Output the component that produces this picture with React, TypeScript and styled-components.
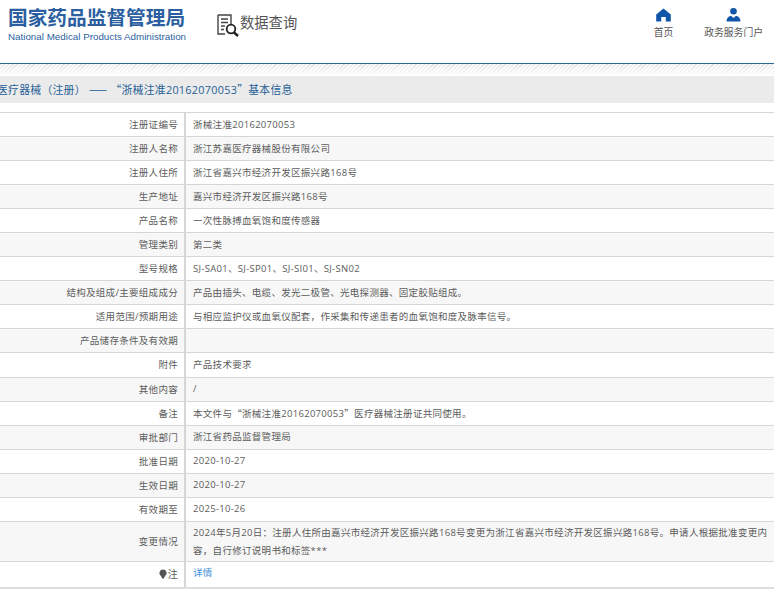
import React from "react";
import styled, { createGlobalStyle } from "styled-components";

const GlobalStyle = createGlobalStyle`
  html, body {
    margin: 0;
    padding: 0;
    background: #fff;
    overflow: hidden;
  }
  body {
    font-family: "Open Sans", "Noto Sans CJK SC", sans-serif;
  }
`;

const CjkMark = styled.span`
  font-family: "Noto Sans CJK SC", sans-serif;
`;

interface RowData {
  label: string;
  value?: React.ReactNode;
}

const rows: RowData[] = [
  { label: "注册证编号", value: "浙械注准20162070053" },
  { label: "注册人名称", value: "浙江苏嘉医疗器械股份有限公司" },
  { label: "注册人住所", value: "浙江省嘉兴市经济开发区振兴路168号" },
  { label: "生产地址", value: "嘉兴市经济开发区振兴路168号" },
  { label: "产品名称", value: "一次性脉搏血氧饱和度传感器" },
  { label: "管理类别", value: "第二类" },
  { label: "型号规格", value: "SJ-SA01、SJ-SP01、SJ-SI01、SJ-SN02" },
  { label: "结构及组成/主要组成成分", value: "产品由插头、电缆、发光二极管、光电探测器、固定胶贴组成。" },
  { label: "适用范围/预期用途", value: "与相应监护仪或血氧仪配套，作采集和传递患者的血氧饱和度及脉率信号。" },
  { label: "产品储存条件及有效期" },
  { label: "附件", value: "产品技术要求" },
  { label: "其他内容", value: "/" },
  {
    label: "备注",
    value: (
      <>
        本文件与<CjkMark>“</CjkMark>浙械注准20162070053<CjkMark>”</CjkMark>医疗器械注册证共同使用。
      </>
    ),
  },
  { label: "审批部门", value: "浙江省药品监督管理局" },
  { label: "批准日期", value: "2020-10-27" },
  { label: "生效日期", value: "2020-10-27" },
  { label: "有效期至", value: "2025-10-26" },
  {
    label: "变更情况",
    value:
      "2024年5月20日：注册人住所由嘉兴市经济开发区振兴路168号变更为浙江省嘉兴市经济开发区振兴路168号。申请人根据批准变更内容，自行修订说明书和标签***",
  },
];

const App: React.FC = () => {
  return (
    <Page>
      <GlobalStyle />
      <Header>
        <Brand>
          <BrandName>国家药品监督管理局</BrandName>
          <BrandSub>National Medical Products Administration</BrandSub>
        </Brand>
        <QueryTitle>
          <svg width="23" height="24" viewBox="0 0 23 24" fill="none">
            <path d="M1 1h13v9M1 1v19h7" stroke="#444" strokeWidth="1.4" />
            <path d="M4 5h7M4 8.500h7M4 12h4M4 15.500h3" stroke="#444" strokeWidth="1.4" />
            <circle cx="14" cy="15" r="4.300" stroke="#222" strokeWidth="1.800" />
            <path d="M17 18.500l4 3.500" stroke="#222" strokeWidth="2.600" />
          </svg>
          <span>数据查询</span>
        </QueryTitle>
        <NavLinks>
          <NavItem>
            <svg width="15" height="14" viewBox="0 0 15 14">
              <path d="M7.500 0.500L14.800 6.400V13.500H9.800V9H5.200V13.500H0.200V6.400Z" fill="#0f56a8" />
            </svg>
            <span>首页</span>
          </NavItem>
          <NavItem>
            <svg width="15" height="14" viewBox="0 0 15 14">
              <circle cx="7.500" cy="3.300" r="3.300" fill="#0f56a8" />
              <path
                d="M0.500 13.500C0.500 10.500 2 8.500 5 7.800L7.500 10L10 7.800C13 8.500 14.500 10.500 14.500 13.500Z"
                fill="#0f56a8"
              />
            </svg>
            <span>政务服务门户</span>
          </NavItem>
        </NavLinks>
      </Header>
      <HatchStrip />
      <Breadcrumb>
        <BreadcrumbText>
          医疗器械（注册）&nbsp;<CjkMark>——</CjkMark>&nbsp;<CjkMark>“</CjkMark>浙械注准20162070053
          <CjkMark>”</CjkMark>基本信息
        </BreadcrumbText>
      </Breadcrumb>
      <InfoTable>
        {rows.map((row, i) => (
          <Row key={row.label} $striped={i % 2 === 1}>
            <LabelCell>{row.label}</LabelCell>
            <ValueCell>{row.value}</ValueCell>
          </Row>
        ))}
        <Row>
          <LabelCell>
            <NoteBulb viewBox="0 0 8 10">
              <path d="M4 0.500a3.500 3.500 0 0 1 2 6.400L4.800 9.500H3.200L2 6.900A3.500 3.500 0 0 1 4 0.500Z" fill="#555" />
            </NoteBulb>
            <NoteLabel>注</NoteLabel>
          </LabelCell>
          <ValueCell $minHeight={25}>
            <DetailLink>详情</DetailLink>
          </ValueCell>
        </Row>
      </InfoTable>
    </Page>
  );
};

const Page = styled.div`
  width: 774px;
  height: 594px;
  overflow: hidden;
`;

const Header = styled.div`
  height: 63px;
  display: flex;
  align-items: flex-start;
  padding-left: 8px;
  border-bottom: 1px solid #2a6a94;
`;

const Brand = styled.div`
  width: 178px;
  padding-top: 5px;
`;

const BrandName = styled.div`
  font-family: "Noto Sans CJK SC", sans-serif;
  font-size: 19.700px;
  font-weight: 700;
  line-height: 24px;
  color: #2b5f9f;
  white-space: nowrap;
`;

const BrandSub = styled.div`
  margin-top: 1px;
  font-family: "Liberation Sans", sans-serif;
  font-size: 9.800px;
  line-height: 14px;
  color: #2b5f9f;
  white-space: nowrap;
`;

const QueryTitle = styled.div`
  display: flex;
  align-items: flex-start;
  margin-left: 31px;
  padding-top: 13px;
  font-size: 14.300px;
  line-height: 20px;
  color: #555;
  svg {
    margin-top: 1px;
  }
`;

const NavLinks = styled.div`
  display: flex;
  margin-left: auto;
  padding-top: 8px;
  margin-right: 11px;
  gap: 31px;
`;

const NavItem = styled.div`
  display: flex;
  flex-direction: column;
  align-items: center;
  font-size: 9.800px;
  line-height: 14px;
  color: #555;
  white-space: nowrap;
  span {
    margin-top: 4px;
  }
`;

const HatchStrip = styled.div`
  height: 12px;
  background:
    linear-gradient(to bottom, rgba(255, 255, 255, 0.2) 0, rgba(255, 255, 255, 1) 100%),
    repeating-linear-gradient(135deg, #d8d8d8 0, #d8d8d8 1px, #f6f6f6 1px, #f6f6f6 3px);
`;

const Breadcrumb = styled.div`
  height: 27px;
  background: #ebebeb;
  display: flex;
  align-items: center;
  overflow: hidden;
`;

const BreadcrumbText = styled.div`
  margin-left: -3px;
  margin-top: -2px;
  font-size: 10.800px;
  letter-spacing: 0.3px;
  color: #1f5f96;
  white-space: nowrap;
`;

const InfoTable = styled.div`
  margin-top: 9px;
  border-top: 1px solid #d6d6d6;
  border-bottom: 2px solid #dedede;
`;

const Row = styled.div<{ $striped?: boolean }>`
  display: flex;
  align-items: stretch;
  background: ${(p) => (p.$striped ? "#f7f7f7" : "#fff")};
  border-bottom: 1px solid #d6d6d6;
  &:last-child {
    border-bottom: none;
  }
`;

const LabelCell = styled.div`
  width: 186px;
  flex-shrink: 0;
  box-sizing: border-box;
  display: flex;
  align-items: center;
  justify-content: flex-end;
  padding-right: 6px;
  padding-bottom: 1px;
  font-size: 9.500px;
  letter-spacing: 0.3px;
  color: #5c5c5c;
  border-right: 2px solid #d6d6d6;
`;

const ValueCell = styled.div<{ $minHeight?: number }>`
  flex: 1;
  min-height: ${(p) => p.$minHeight ?? 23.060}px;
  padding: 2.500px 0 0.500px 7px;
  box-sizing: border-box;
  font-size: 9.500px;
  letter-spacing: 0.3px;
  line-height: 18px;
  color: #5c5c5c;
`;

const NoteBulb = styled.svg`
  width: 8px;
  height: 10px;
  margin-right: 1px;
`;

const NoteLabel = styled.span`
  font-size: 10px;
`;

const DetailLink = styled.span`
  color: #3c8fdc;
`;

export default App;
